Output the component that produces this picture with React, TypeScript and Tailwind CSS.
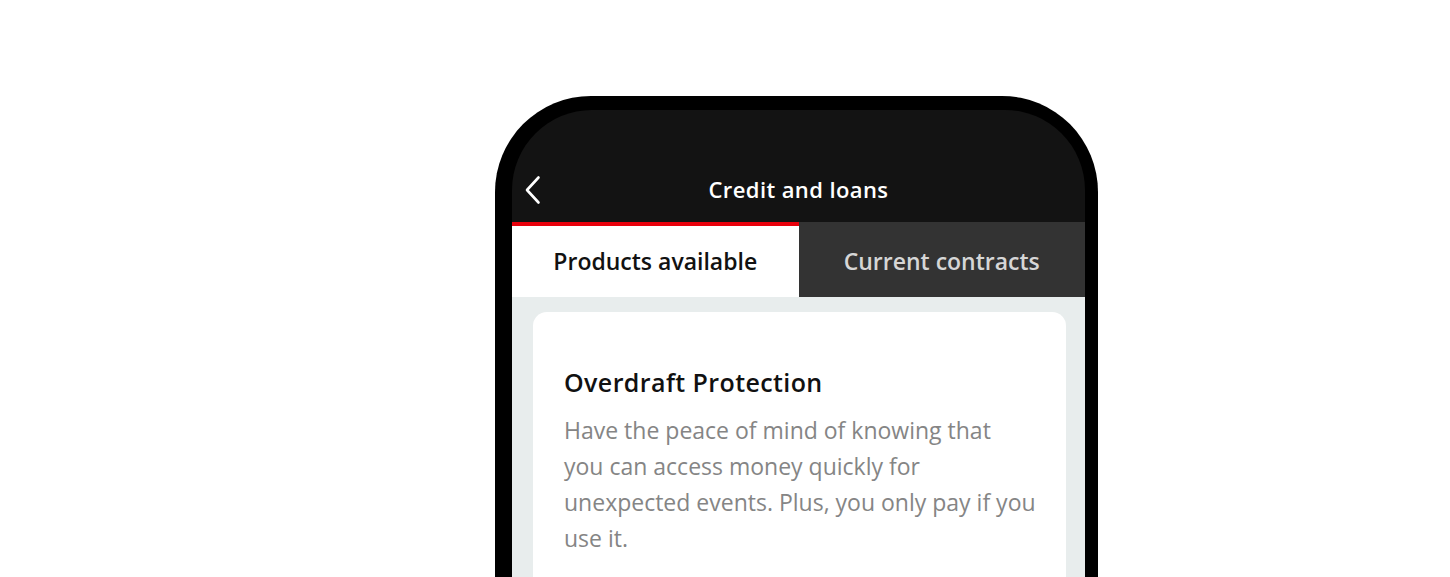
import React from "react";

export default function App() {
  return (
    <div className="h-[577px] w-[1450px] overflow-hidden bg-white pt-[96px] pl-[495px] font-['Open_Sans',sans-serif]">
      <div className="w-[603px] h-[520px] bg-black rounded-t-[96px] pt-[14px] pl-[17px] pr-[13px]">
        <div className="h-full bg-[#131313] rounded-t-[80px] overflow-hidden flex flex-col">
          {/* Header */}
          <div className="h-[112px] flex flex-col justify-end shrink-0">
            <div className="h-[64px] grid grid-cols-[60px_1fr_60px] items-center">
              <div className="pl-[13px] flex items-center">
                <svg width="16" height="30" viewBox="0 0 16 30" fill="none">
                  <path d="M13.5 2.5 L2 15 L13.5 27.5" stroke="white" strokeWidth="2.6" strokeLinecap="round" strokeLinejoin="round" />
                </svg>
              </div>
              <div className="text-center text-white text-[22px] tracking-[0.4px] font-semibold leading-none pb-[2px]">Credit and loans</div>
              <div />
            </div>
          </div>
          {/* Tabs */}
          <div className="grid grid-cols-2 h-[75px] shrink-0">
            <div className="bg-white border-t-4 border-[#e8000b] flex items-center justify-center text-[23px] font-semibold text-[#111111]">
              Products available
            </div>
            <div className="bg-[#333333] flex items-center justify-center pt-1 text-[23px] font-semibold text-[#d6d6d6]">
              Current contracts
            </div>
          </div>
          {/* Content */}
          <div className="flex-1 bg-[#e8eded] pt-[15px] pl-[21px] pr-[19px]">
            <div className="bg-white rounded-[14px] h-[400px] pt-[54px] pl-[31px] pr-[24px]">
              <div className="text-[25px] tracking-[0.4px] font-semibold text-[#111111] leading-[32px]">Overdraft Protection</div>
              <p className="mt-[14px] text-[23px] leading-[36px] text-[#858585] whitespace-nowrap">
                Have the peace of mind of knowing that
                <br />
                you can access money quickly for
                <br />
                unexpected events. Plus, you only pay if you
                <br />
                use it.
              </p>
            </div>
          </div>
        </div>
      </div>
    </div>
  );
}
